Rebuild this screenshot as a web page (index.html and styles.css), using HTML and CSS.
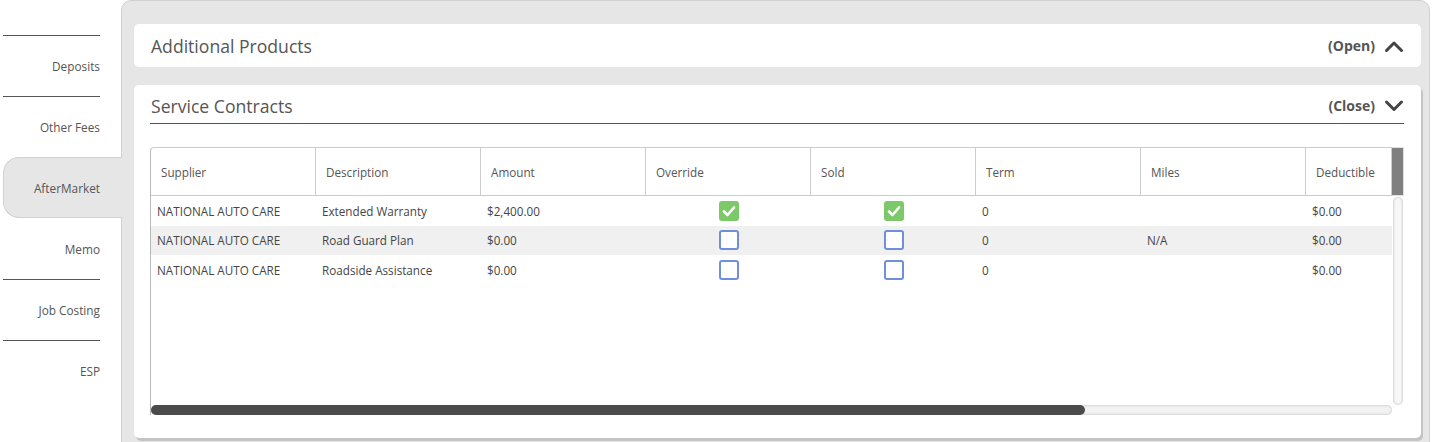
FILE: index.html
```html
<!DOCTYPE html>
<html>
<head>
<meta charset="utf-8">
<link rel="stylesheet" href="styles.css">
</head>
<body>
<div class="app">
  <nav class="sidebar">
    <div class="nav-spacer"></div>
    <div class="nav-item lined">Deposits</div>
    <div class="nav-item lined">Other Fees</div>
    <div class="nav-item active">AfterMarket</div>
    <div class="nav-item">Memo</div>
    <div class="nav-item lined">Job Costing</div>
    <div class="nav-item lined">ESP</div>
  </nav>
  <main class="panel">
    <section class="card card-collapsed">
      <h2 class="card-title">Additional Products</h2>
      <div class="toggle">
        <span class="toggle-label">(Open)</span>
        <svg class="chev" width="20" height="14" viewBox="0 0 20 14"><polyline points="2.5,11.5 10,4 17.5,11.5" fill="none" stroke="#444" stroke-width="3" stroke-linecap="round" stroke-linejoin="round"/></svg>
      </div>
    </section>
    <section class="card card-open">
      <div class="card-head">
        <h2 class="card-title">Service Contracts</h2>
        <div class="toggle">
          <span class="toggle-label">(Close)</span>
          <svg class="chev" width="20" height="14" viewBox="0 0 20 14"><polyline points="2.5,3 10,10.5 17.5,3" fill="none" stroke="#444" stroke-width="3" stroke-linecap="round" stroke-linejoin="round"/></svg>
        </div>
      </div>
      <div class="grid-box">
        <div class="grid-main">
          <div class="grid-header">
            <div class="hcell">Supplier</div>
            <div class="hcell">Description</div>
            <div class="hcell">Amount</div>
            <div class="hcell">Override</div>
            <div class="hcell">Sold</div>
            <div class="hcell">Term</div>
            <div class="hcell">Miles</div>
            <div class="hcell">Deductible</div>
          </div>
          <div class="grid-body">
            <div class="row">
              <div class="cell">NATIONAL AUTO CARE</div>
              <div class="cell">Extended Warranty</div>
              <div class="cell">$2,400.00</div>
              <div class="cell center"><span class="cb checked"><svg width="20" height="20" viewBox="0 0 20 20"><polyline points="5,10.5 8.5,14 15,6.5" fill="none" stroke="#fff" stroke-width="2.6" stroke-linecap="round" stroke-linejoin="round"/></svg></span></div>
              <div class="cell center"><span class="cb checked"><svg width="20" height="20" viewBox="0 0 20 20"><polyline points="5,10.5 8.5,14 15,6.5" fill="none" stroke="#fff" stroke-width="2.6" stroke-linecap="round" stroke-linejoin="round"/></svg></span></div>
              <div class="cell">0</div>
              <div class="cell"></div>
              <div class="cell">$0.00</div>
            </div>
            <div class="row alt">
              <div class="cell">NATIONAL AUTO CARE</div>
              <div class="cell">Road Guard Plan</div>
              <div class="cell">$0.00</div>
              <div class="cell center"><span class="cb"></span></div>
              <div class="cell center"><span class="cb"></span></div>
              <div class="cell">0</div>
              <div class="cell">N/A</div>
              <div class="cell">$0.00</div>
            </div>
            <div class="row">
              <div class="cell">NATIONAL AUTO CARE</div>
              <div class="cell">Roadside Assistance</div>
              <div class="cell">$0.00</div>
              <div class="cell center"><span class="cb"></span></div>
              <div class="cell center"><span class="cb"></span></div>
              <div class="cell">0</div>
              <div class="cell"></div>
              <div class="cell">$0.00</div>
            </div>
          </div>
          <div class="hscroll"><div class="hthumb"></div></div>
        </div>
        <div class="vscroll">
          <div class="vthumb"></div>
          <div class="vtrack"></div>
        </div>
      </div>
    </section>
  </main>
</div>
</body>
</html>
```

FILE: styles.css
```css
* { box-sizing: border-box; }
html, body { margin: 0; padding: 0; background: #fff; }
body {
  font-family: "Open Sans", "DejaVu Sans", sans-serif;
  color: #555;
  width: 1433px;
  height: 442px;
  overflow: hidden;
}
.app {
  display: flex;
  height: 442px;
}
.sidebar {
  width: 121px;
  flex: none;
  display: flex;
  flex-direction: column;
  position: relative;
  z-index: 2;
}
.nav-spacer {
  height: 35px;
  margin: 0 21px 0 3px;
}
.nav-item {
  height: 61px;
  margin: 0 21px 0 3px;
  display: flex;
  align-items: center;
  justify-content: flex-end;
  font-size: 11.8px;
  color: #555;
}
.nav-item.lined { border-top: 1px solid #555; }
.nav-item.active {
  margin-right: -1px;
  padding-right: 22px;
  background: #e6e6e6;
  border: 1px solid #d2d2d2;
  border-right: none;
  border-radius: 16px 0 0 16px;
}
.panel {
  flex: none;
  width: 1309px;
  height: 460px;
  background: #e6e6e6;
  border: 1px solid #d0d0d0;
  border-radius: 10px 10px 0 0;
  padding: 23px 8px 0 12px;
  display: flex;
  flex-direction: column;
}
.card {
  background: #fff;
  border-radius: 5px;
}
.card-collapsed {
  height: 43px;
  padding: 0 17px;
  display: flex;
  align-items: center;
  justify-content: space-between;
}
.card-title {
  margin: 0;
  font-size: 17.6px;
  font-weight: 400;
  color: #555;
}
.toggle {
  display: flex;
  align-items: center;
  gap: 9px;
}
.toggle-label {
  font-size: 14px;
  font-weight: 700;
  color: #555;
}
.chev { display: block; }
.card-open {
  margin-top: 18px;
  padding: 0 17px 23px 16px;
  box-shadow: 2px 3px 0 #c4c4c4;
}
.card-head {
  height: 39px;
  border-bottom: 1px solid #555;
  display: flex;
  align-items: center;
  justify-content: space-between;
  padding-top: 3px;
}
.card-head .card-title { padding-left: 1px; }
.grid-box {
  margin-top: 23px;
  display: flex;
  height: 268px;
}
.grid-main {
  flex: 1;
  display: flex;
  flex-direction: column;
  border-top: 1px solid #ccc;
  border-left: 1px solid #b8b8b8;
  border-top-left-radius: 4px;
}
.grid-header, .row {
  display: grid;
  grid-template-columns: repeat(7, 165px) 1fr;
}
.grid-header {
  height: 48px;
  border-bottom: 1px solid #ccc;
}
.hcell {
  display: flex;
  align-items: center;
  padding-left: 10px;
  font-size: 11.7px;
  color: #555;
  border-right: 1px solid #ccc;
}
.grid-body {
  flex: 1;
}
.row {
  height: 29.5px;
}
.row.alt { background: #f0f0f0; }
.cell {
  display: flex;
  align-items: center;
  padding-left: 6px;
  font-size: 11.7px;
  color: #454545;
  white-space: nowrap;
}
.cell.center {
  justify-content: center;
  padding-left: 0;
}
.cb {
  width: 20px;
  height: 20px;
  border: 2px solid #6f8fd8;
  border-radius: 3px;
  background: #fff;
  display: block;
}
.cb.checked {
  border: none;
  background: #7dc96a;
}
.cb svg { display: block; }
.hscroll {
  height: 10px;
  background: #f2f2f2;
  border-radius: 5px;
  box-shadow: inset 0 1px 2px #d6d6d6, inset 0 -1px 2px #d6d6d6;
}
.hthumb {
  width: 934px;
  height: 10px;
  background: #4b4b4b;
  border-radius: 5px;
}
.vscroll {
  width: 12px;
  flex: none;
  display: flex;
  flex-direction: column;
  align-items: center;
}
.vthumb {
  width: 12px;
  height: 49px;
  background: #808080;
  border: 1px solid #e0e0e0;
  border-left: none;
}
.vtrack {
  width: 10px;
  height: 208px;
  margin-top: 1px;
  background: #f7f7f7;
  border-radius: 5px;
  box-shadow: inset 1px 0 2px #d4d4d4, inset -1px 0 2px #d4d4d4;
}
```
